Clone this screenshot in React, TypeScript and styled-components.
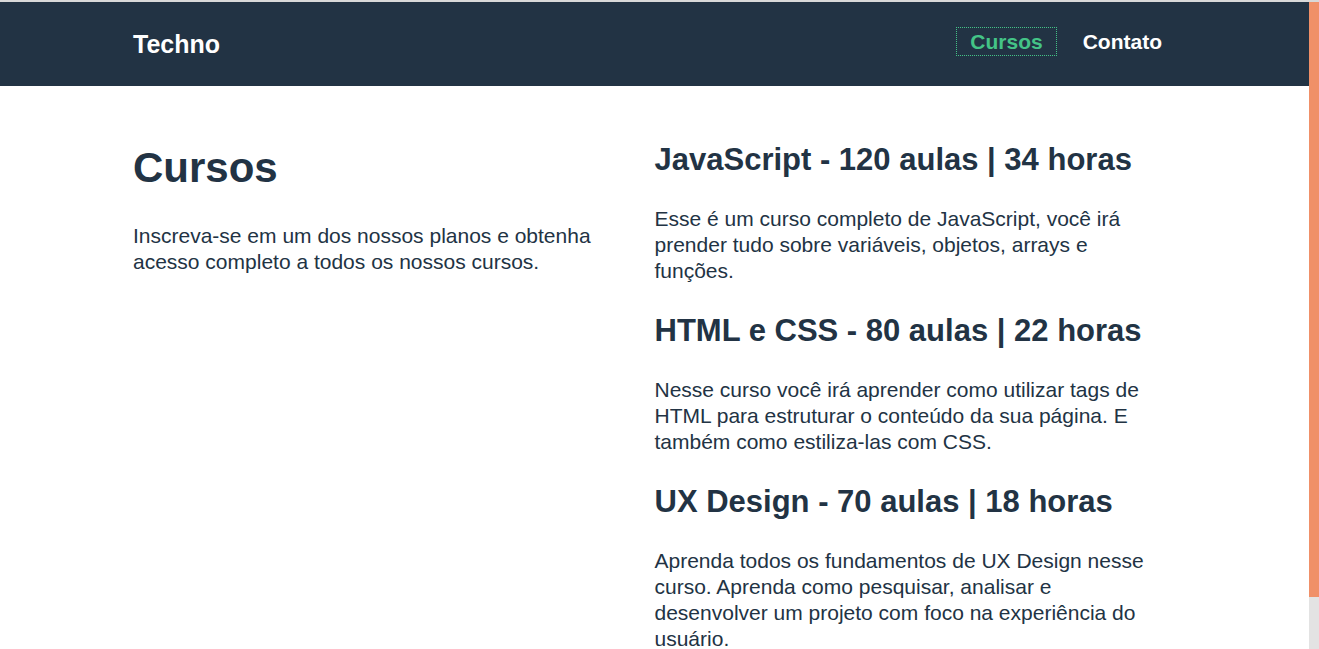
import React from "react";
import styled, { createGlobalStyle } from "styled-components";

const GlobalStyle = createGlobalStyle`
  html, body {
    margin: 0;
    padding: 0;
    overflow: hidden;
  }
  body {
    font-family: "Liberation Sans", Arial, Helvetica, sans-serif;
    color: #223344;
    background: #ffffff;
  }
  * {
    box-sizing: border-box;
  }
`;

const Frame = styled.div`
  height: 100vh;
  display: flex;
  border-top: 2px solid #d9d9d9;
  overflow: hidden;
`;

const Page = styled.div`
  flex: 1;
  min-width: 0;
  overflow: hidden;
`;

const ScrollTrack = styled.div`
  width: 10px;
  flex-shrink: 0;
  background: #e3e3e3;
  display: flex;
  flex-direction: column;
`;

const ScrollThumb = styled.div`
  height: 595px;
  background: #f09068;
`;

const Header = styled.header`
  background: #223344;
`;

const HeaderInner = styled.div`
  max-width: 1043px;
  margin: 0 auto;
  height: 84px;
  display: flex;
  align-items: center;
  justify-content: space-between;
`;

const Logo = styled.a`
  color: #ffffff;
  font-size: 25px;
  line-height: 25px;
  font-weight: 700;
  text-decoration: none;
`;

const Nav = styled.nav`
  display: flex;
  gap: 12px;
  margin-bottom: 5px;
`;

const NavLink = styled.a<{ $active?: boolean }>`
  display: block;
  font-size: 21px;
  line-height: 23px;
  font-weight: 700;
  padding: 2px 13px;
  text-decoration: none;
  color: ${(p) => (p.$active ? "#44c487" : "#ffffff")};
  border: 1px dotted ${(p) => (p.$active ? "#44c487" : "transparent")};
`;

const Main = styled.main`
  max-width: 1043px;
  margin: 0 auto;
  padding: 55px 0;
  display: grid;
  grid-template-columns: 1fr 1fr;
`;

const Intro = styled.section`
  padding-right: 20px;
`;

const Title = styled.h1`
  font-size: 42px;
  line-height: 50px;
  font-weight: 700;
  margin: 2px 0 30px;
`;

const Text = styled.p`
  font-size: 21px;
  line-height: 26px;
  margin: 0;
`;

const CourseList = styled.section`
  display: flex;
  flex-direction: column;
  gap: 28px;
  padding-right: 20px;
`;

const Course = styled.div``;

const CourseTitle = styled.h2`
  font-size: 31px;
  line-height: 37px;
  font-weight: 700;
  margin: 0 0 28px;
`;

const courses = [
  {
    title: "JavaScript - 120 aulas | 34 horas",
    text: "Esse é um curso completo de JavaScript, você irá prender tudo sobre variáveis, objetos, arrays e funções.",
  },
  {
    title: "HTML e CSS - 80 aulas | 22 horas",
    text: "Nesse curso você irá aprender como utilizar tags de HTML para estruturar o conteúdo da sua página. E também como estiliza-las com CSS.",
  },
  {
    title: "UX Design - 70 aulas | 18 horas",
    text: "Aprenda todos os fundamentos de UX Design nesse curso. Aprenda como pesquisar, analisar e desenvolver um projeto com foco na experiência do usuário.",
  },
];

export default function App() {
  return (
    <>
      <GlobalStyle />
      <Frame>
        <Page>
          <Header>
            <HeaderInner>
              <Logo href="#">Techno</Logo>
              <Nav>
                <NavLink href="#" $active>
                  Cursos
                </NavLink>
                <NavLink href="#">Contato</NavLink>
              </Nav>
            </HeaderInner>
          </Header>
          <Main>
            <Intro>
              <Title>Cursos</Title>
              <Text>
                Inscreva-se em um dos nossos planos e obtenha acesso completo a todos os nossos cursos.
              </Text>
            </Intro>
            <CourseList>
              {courses.map((c) => (
                <Course key={c.title}>
                  <CourseTitle>{c.title}</CourseTitle>
                  <Text>{c.text}</Text>
                </Course>
              ))}
            </CourseList>
          </Main>
        </Page>
        <ScrollTrack>
          <ScrollThumb />
        </ScrollTrack>
      </Frame>
    </>
  );
}
